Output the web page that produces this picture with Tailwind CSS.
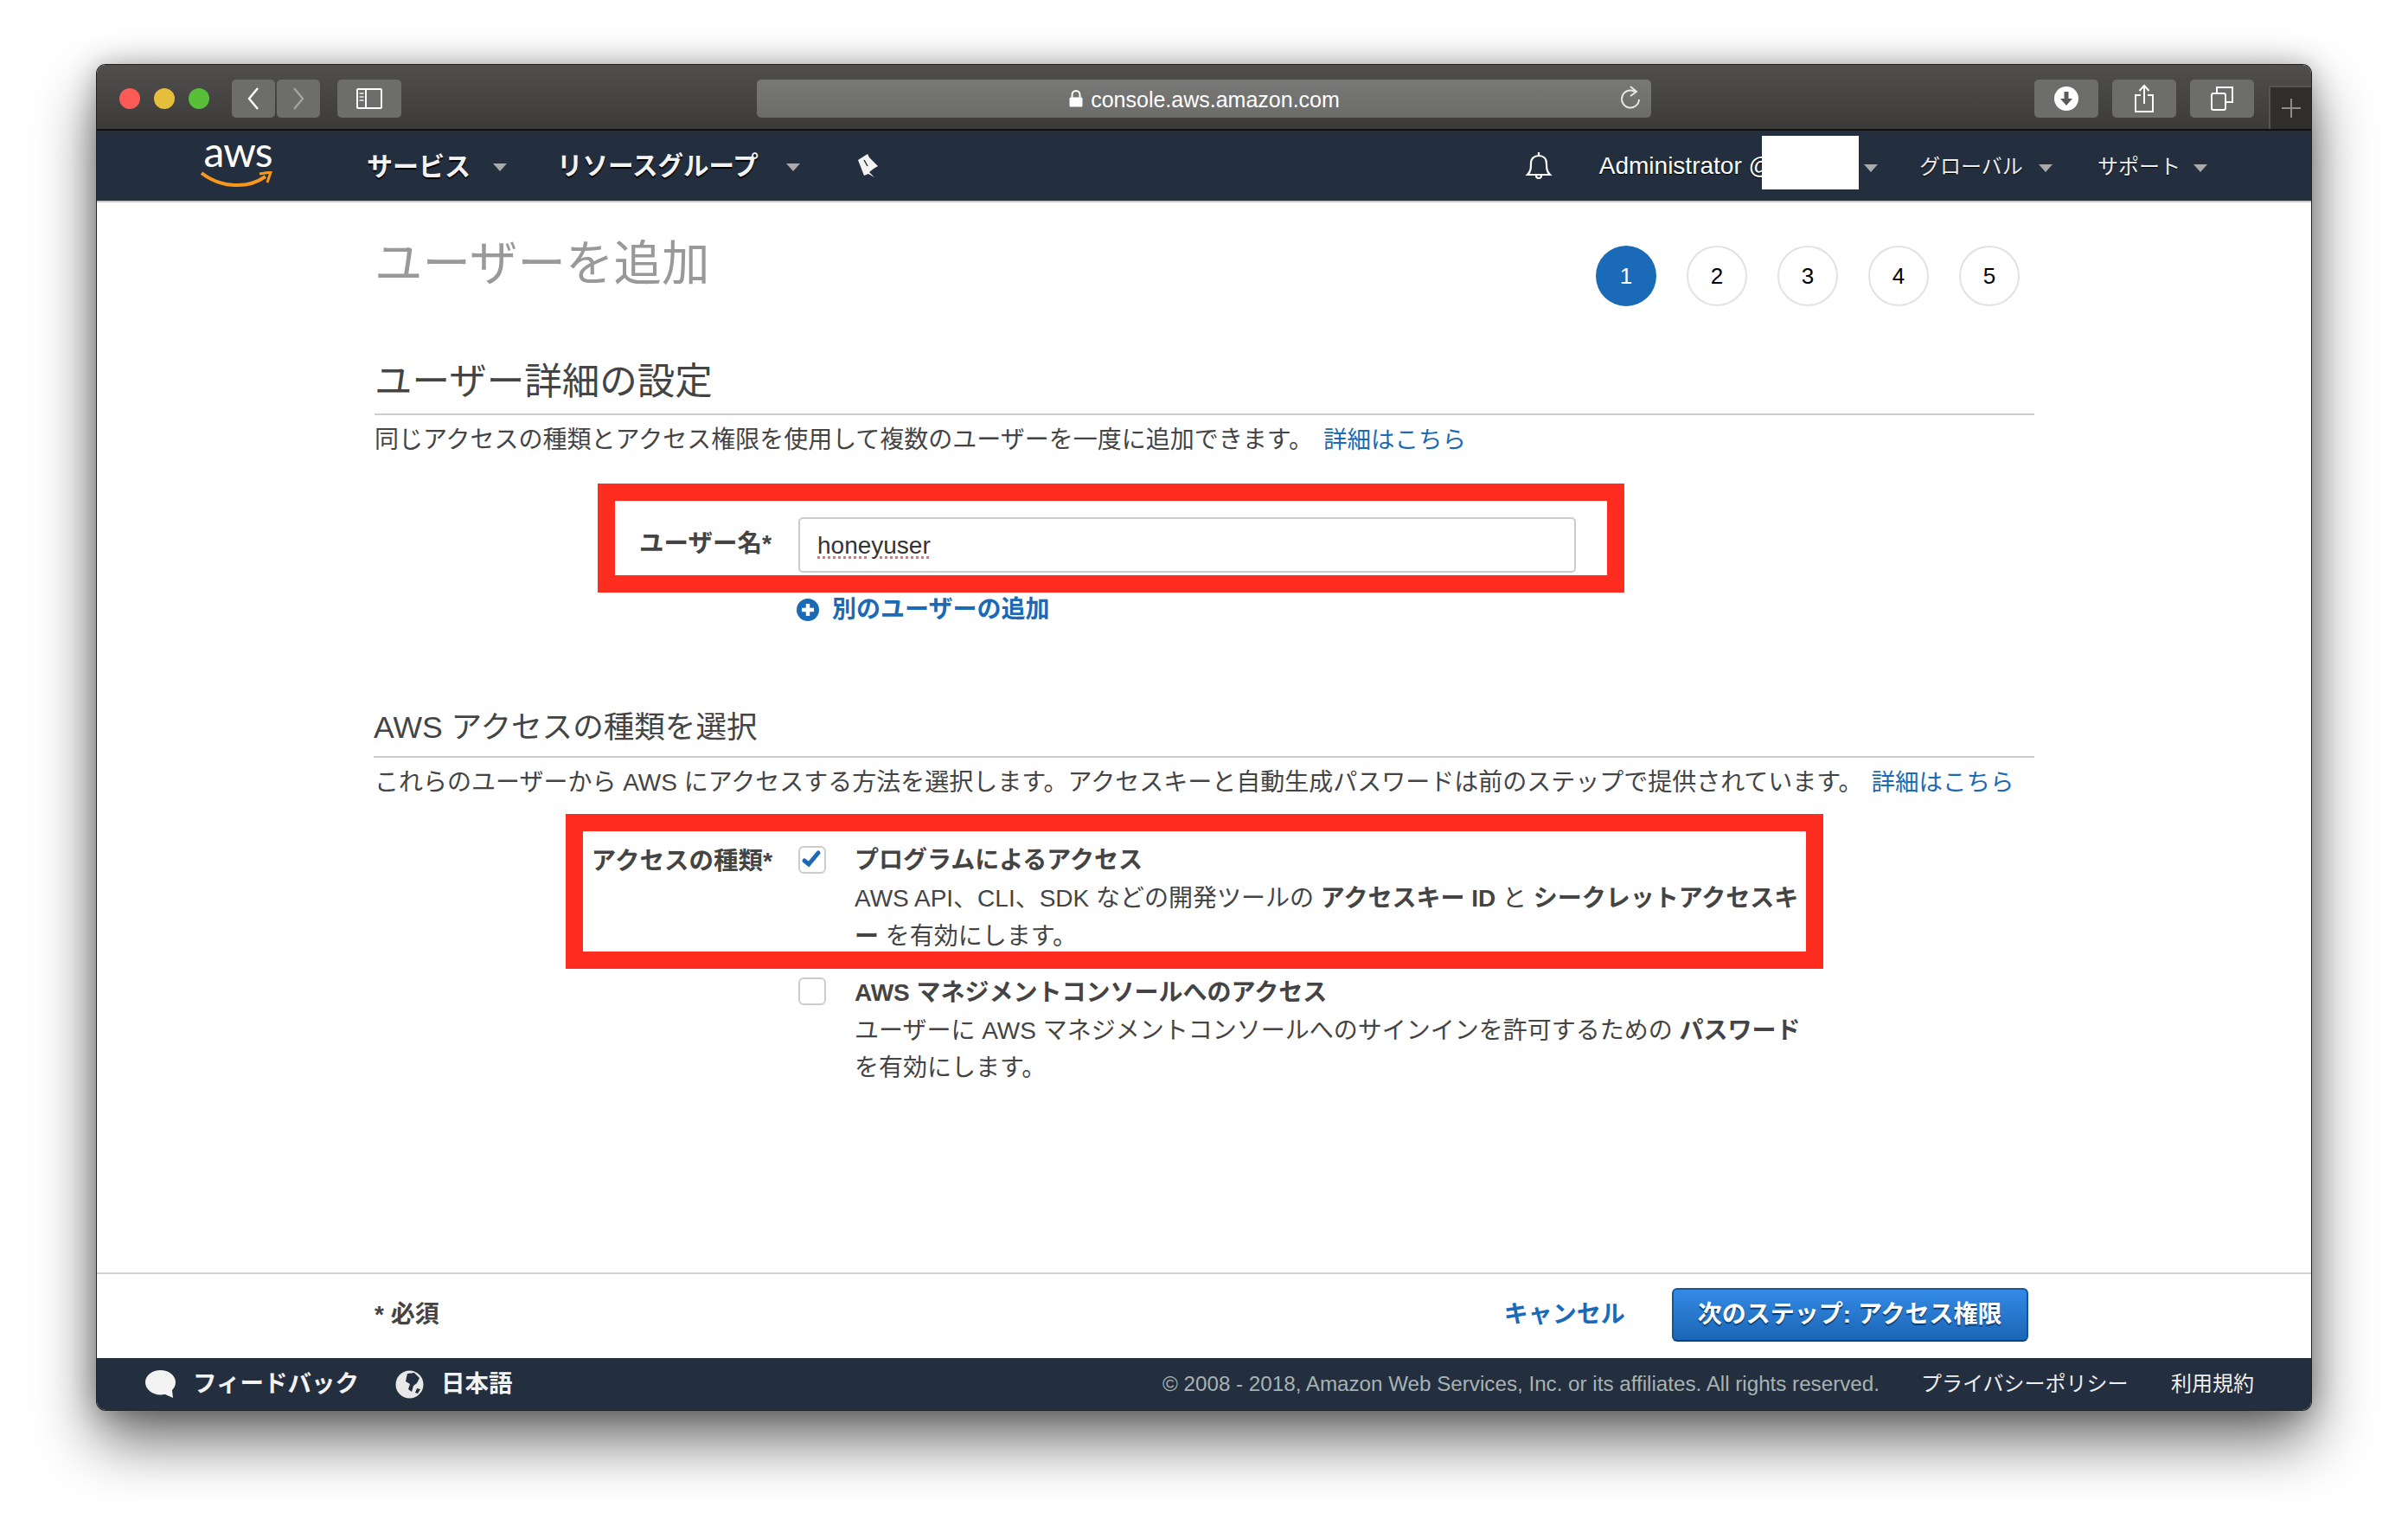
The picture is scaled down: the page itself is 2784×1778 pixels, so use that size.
<!DOCTYPE html>
<html lang="ja"><head><meta charset="utf-8"><script src="https://cdn.jsdelivr.net/npm/@tailwindcss/browser@4"></script></head>
<body class="bg-white m-0 w-[2784px] h-[1778px] overflow-hidden font-['Liberation_Sans','Noto_Sans_CJK_JP',sans-serif]">
<div class="pt-[75px] pl-[112px]">
<div class="relative w-[2560px] h-[1555px] rounded-[10px] flex flex-col bg-white shadow-[0_0_0_1px_#222,0_34px_70px_rgba(0,0,0,0.6),0_0_32px_rgba(0,0,0,0.28)]">
  <!-- title bar -->
  <div class="relative h-[76px] shrink-0 rounded-t-[10px] bg-gradient-to-b from-[#504f4d] to-[#3c3b39] border-b-2 border-[#111] flex items-start pt-[17px] pl-[26px]">
    <span class="w-6 h-6 mt-[10px] rounded-full bg-[#fc5b57]"></span>
    <span class="w-6 h-6 mt-[10px] ml-4 rounded-full bg-[#e5bf3c]"></span>
    <span class="w-6 h-6 mt-[10px] ml-4 rounded-full bg-[#57c038]"></span>
    <div class="ml-[26px] w-[50px] h-11 rounded-[5px] bg-[#6d6d6b] flex items-center justify-center"><svg width="18" height="30" viewBox="0 0 18 30" fill="none" stroke="#fff" stroke-width="2.4"><path d="M14 3 4 15l10 12"/></svg></div>
    <div class="ml-[2px] w-[50px] h-11 rounded-[5px] bg-[#6d6d6b] flex items-center justify-center"><svg width="18" height="30" viewBox="0 0 18 30" fill="none" stroke="#a3a3a1" stroke-width="2.4"><path d="M4 3l10 12L4 27"/></svg></div>
    <div class="ml-5 w-[74px] h-11 rounded-[5px] bg-[#6d6d6b] flex items-center justify-center"><svg width="30" height="24" viewBox="0 0 30 24" fill="none" stroke="#fff" stroke-width="2"><rect x="1" y="1" width="28" height="22" rx="1"/><path d="M11 1v22"/><path d="M3.500 6h5M3.500 10h5M3.500 14h5" stroke="#ccc"/></svg></div>
    <div class="relative ml-[411px] w-[1034px] h-11 rounded-[5px] bg-gradient-to-b from-[#787876] to-[#6c6c6a] flex items-center justify-center text-white text-[25px]">
      <svg class="mr-2" width="18" height="22" viewBox="0 0 18 22"><path d="M4.500 10V6.500a4.500 4.500 0 0 1 9 0V10" fill="none" stroke="#fff" stroke-width="2"/><rect x="1.500" y="9.500" width="15" height="11" rx="1.500" fill="#fff"/></svg>
      <span class="mt-[3px]">console.aws.amazon.com</span>
      <svg class="absolute right-[11px] top-[6px]" width="26" height="30" viewBox="0 0 26 30" fill="none" stroke="#e6e6e6" stroke-width="2"><path d="M19 8.500A10 10 0 1 0 23 17"/><path d="M13 2l7 6-7 5" stroke-width="2"/></svg>
    </div>
    <div class="ml-[443px] w-[74px] h-11 rounded-[5px] bg-[#6d6d6b] flex items-center justify-center"><svg width="28" height="28" viewBox="0 0 28 28"><circle cx="14" cy="14" r="14" fill="#fff"/><path d="M11.500 6h5v8h4.500L14 22l-7-8h4.500z" fill="#5a5a58"/></svg></div>
    <div class="ml-4 w-[74px] h-11 rounded-[5px] bg-[#6d6d6b] flex items-center justify-center"><svg width="24" height="34" viewBox="0 0 24 34" fill="none" stroke="#fff" stroke-width="2"><path d="M8 13H2v19h20V13h-6"/><path d="M12 23V2M6.500 8 12 2l5.500 6"/></svg></div>
    <div class="ml-4 w-[74px] h-11 rounded-[5px] bg-[#6d6d6b] flex items-center justify-center"><svg width="26" height="28" viewBox="0 0 26 28" fill="none" stroke="#fff" stroke-width="2"><rect x="1" y="8" width="16" height="19" rx="2"/><path d="M7 8V1h18v17h-8"/></svg></div>
    <div class="absolute right-0 bottom-0 w-[49px] h-[50px] bg-[#2f2e2d] border-l-2 border-t-2 border-[#555] flex items-center justify-center"><svg width="22" height="22" viewBox="0 0 22 22" stroke="#8c8c8c" stroke-width="2"><path d="M11 0v22M0 11h22"/></svg></div>
  </div>
  <!-- aws nav -->
  <div class="relative h-[83px] shrink-0 bg-[#232f3e] border-b-2 border-[#c8c8c8] flex items-center text-white">
    <div class="relative ml-[123px] w-[80px] h-[60px] mb-[6px]">
      <span class="absolute left-0 top-[-7px] w-[80px] text-center text-[48px] leading-[46px] tracking-[-1px] font-['Lato',sans-serif] text-white">aws</span>
      <svg class="absolute left-[-3px] top-[39px]" width="86" height="20" viewBox="0 0 86 20" fill="none"><path d="M1 2c22 17 53 19 74 4" stroke="#f7981d" stroke-width="4"/><path d="M68 3l13-2-4 12" stroke="#f7981d" stroke-width="3"/></svg>
    </div>
    <span class="ml-[109px] mt-[2px] text-[30px] font-bold [text-shadow:0_2px_1px_#000] text-[#f3f3f3]">サービス</span>
    <svg class="ml-[25px] mt-[4px]" width="18" height="11" viewBox="0 0 18 11"><path d="M1 1h16L9 10z" fill="#aaa"/></svg>
    <span class="ml-[57px] mt-[2px] text-[29.500px] font-bold [text-shadow:0_2px_1px_#000] text-[#f3f3f3]">リソースグループ</span>
    <svg class="ml-[31px] mt-[4px]" width="18" height="11" viewBox="0 0 18 11"><path d="M1 1h16L9 10z" fill="#aaa"/></svg>
    <svg class="ml-[65px]" width="26" height="30" viewBox="9 7 26 30"><path d="M10 15 21 8l2 4 10 10-5 3-5 4 6 6-7-4-5 2z" fill="#f3f3f3"/><path d="M17 15l4 7" stroke="#232f3e" stroke-width="1.500"/></svg>
    <svg class="ml-[746px]" width="32" height="36" viewBox="0 0 32 36" fill="none" stroke="#fff" stroke-width="2.200"><path d="M3 28c4-4 4-8 4-13 0-6 4-9 9-9s9 3 9 9c0 5 0 9 4 13z"/><path d="M16 6V2M13 29a3 3 0 0 0 6 0"/></svg>
    <span class="ml-[54px] text-[28px] [text-shadow:0_1px_1px_#000] whitespace-nowrap">Administrator @</span>
    <svg class="absolute left-[2042px] top-[38px]" width="18" height="11" viewBox="0 0 18 11"><path d="M1 1h16L9 10z" fill="#aaa"/></svg>
    <span class="absolute left-[2107px] mt-[2px] text-[24px] [text-shadow:0_1px_1px_#000] text-[#eee]">グローバル</span>
    <svg class="absolute left-[2244px] top-[38px]" width="18" height="11" viewBox="0 0 18 11"><path d="M1 1h16L9 10z" fill="#aaa"/></svg>
    <span class="absolute left-[2313px] mt-[2px] text-[24px] [text-shadow:0_1px_1px_#000] text-[#eee]">サポート</span>
    <svg class="absolute left-[2423px] top-[38px]" width="18" height="11" viewBox="0 0 18 11"><path d="M1 1h16L9 10z" fill="#aaa"/></svg>
    <div class="absolute left-[1925px] top-[6px] w-[112px] h-[62px] bg-white"></div>
  </div>
  <!-- main -->
  <div class="flex-1 pl-[321px] pr-[320px] text-[#444]">
    <div class="flex justify-between items-start pt-10 h-[120px]">
      <h1 class="text-[55.500px] leading-[62px] font-normal text-[#999]">ユーザーを追加</h1>
      <div class="flex gap-[35px] mt-[10px] mr-[17px] text-[26px] text-black">
        <span class="w-[70px] h-[70px] rounded-full bg-[#1b6ab7] text-white flex items-center justify-center">1</span>
        <span class="w-[70px] h-[70px] rounded-full border-2 border-[#e2e2e2] flex items-center justify-center">2</span>
        <span class="w-[70px] h-[70px] rounded-full border-2 border-[#e2e2e2] flex items-center justify-center">3</span>
        <span class="w-[70px] h-[70px] rounded-full border-2 border-[#e2e2e2] flex items-center justify-center">4</span>
        <span class="w-[70px] h-[70px] rounded-full border-2 border-[#e2e2e2] flex items-center justify-center">5</span>
      </div>
    </div>
    <h2 class="mt-[62px] text-[43.500px] leading-[50px] pb-[12px] border-b-2 border-[#ccc] font-normal">ユーザー詳細の設定</h2>
    <p class="mt-[9px] text-[28px] leading-10 whitespace-nowrap">同じアクセスの種類とアクセス権限を使用して複数のユーザーを一度に追加できます。<a class="ml-3 text-[27.500px] text-[#1b6ab7]">詳細はこちら</a></p>
    <div class="mt-[69px] flex items-center h-16">
      <label class="w-[459px] text-right font-bold text-[28.500px] mb-[4px] mr-px">ユーザー名*</label>
      <div class="ml-[30px] w-[899px] h-16 border-2 border-[#ccc] rounded-[5px] flex items-center pl-5 pt-[2px] text-[28px] text-[#333]"><span class="underline decoration-dotted decoration-[#f66] decoration-[3px] underline-offset-[3px]">honeyuser</span></div>
    </div>
    <div class="mt-[23px] pl-[488px] flex items-center h-10 text-[#1b6ab7] font-bold text-[28px]">
      <svg width="26" height="26" viewBox="0 0 26 26"><circle cx="13" cy="13" r="13" fill="#1b6ab7"/><path d="M13 6v14M6 13h14" stroke="#fff" stroke-width="4.500"/></svg>
      <span class="ml-[15px]">別のユーザーの追加</span>
    </div>
    <h2 class="mt-[91px] text-[35.600px] leading-[50px] pb-[8px] border-b-2 border-[#ccc] font-normal -ml-px">AWS アクセスの種類を選択</h2>
    <p class="mt-[9px] text-[28px] leading-10 whitespace-nowrap">これらのユーザーから AWS にアクセスする方法を選択します。アクセスキーと自動生成パスワードは前のステップで提供されています。<a class="ml-[10px] text-[27.500px] text-[#1b6ab7]">詳細はこちら</a></p>
    <div class="mt-[48px] flex items-start text-[28px] leading-11">
      <label class="w-[460px] text-right font-bold whitespace-nowrap text-[28.500px]">アクセスの種類*</label>
      <span class="ml-[30px] mt-[5px] w-[32px] h-[32px] shrink-0 border-2 border-[#ccc] rounded-[6px] bg-white flex items-center justify-center"><svg width="28" height="28" viewBox="0 0 28 28" fill="none"><path d="M5 15l5 4L21 6" stroke="#1b6ab7" stroke-width="5" stroke-linecap="round"/></svg></span>
      <div class="ml-[33px] whitespace-nowrap"><div class="font-bold">プログラムによるアクセス</div><div>AWS API、CLI、SDK などの開発ツールの <b>アクセスキー ID</b> と <b>シークレットアクセスキ<br>ー</b> を有効にします。</div></div>
    </div>
    <div class="mt-[21px] flex items-start text-[28px] leading-[43.500px]">
      <span class="ml-[490px] mt-1 w-[32px] h-[32px] shrink-0 border-2 border-[#ccc] rounded-[6px] bg-white"></span>
      <div class="ml-[33px] whitespace-nowrap"><div class="font-bold">AWS マネジメントコンソールへのアクセス</div><div>ユーザーに AWS マネジメントコンソールへのサインインを許可するための <b>パスワード</b><br>を有効にします。</div></div>
    </div>
  </div>
  <!-- form footer -->
  <div class="h-[99px] shrink-0 border-t-2 border-[#d5d5d5] flex items-center pl-[321px] pb-1 text-[28px] font-bold text-[#444]">
    <span>* 必須</span>
    <a class="ml-[1231px] text-[#1b6ab7] whitespace-nowrap">キャンセル</a>
    <button class="ml-[54px] w-[412px] h-[62px] rounded-[6px] border-2 border-[#13569c] border-b-[#0d4178] bg-gradient-to-b from-[#338ae6] to-[#1b66b5] text-white [text-shadow:0_2px_1px_#0a3a70] whitespace-nowrap">次のステップ: アクセス権限</button>
  </div>
  <!-- footer -->
  <div class="h-[60px] shrink-0 rounded-b-[10px] bg-[#232f3e] flex items-center text-white relative">
    <svg class="ml-[56px]" width="35" height="33" viewBox="0 0 35 33"><path d="M17.500 0C27 0 35 6 35 14c0 4-2 7-4 9l1 9-9-4c-2 0-4 .5-5.500 .5C8 28.500 0 22 0 14 0 6 8 0 17.500 0z" fill="#f3f3f3"/></svg>
    <span class="ml-5 text-[27.500px] font-bold text-[#f3f3f3]">フィードバック</span>
    <svg class="ml-[42px]" width="33" height="33" viewBox="0 0 33 33"><circle cx="16.500" cy="16.500" r="16" fill="#e8e8e8"/><path d="M14 4l8-1 6 6-3 6-4 3-2 7-4-3 2-6-5-3 1-5zM25 21l4 1-3 5-3-1z" fill="#232f3e"/></svg>
    <span class="ml-5 text-[27.500px] font-bold text-[#f3f3f3]">日本語</span>
    <span class="absolute left-[1232px] text-[24.200px] text-[#a9b2b2] whitespace-nowrap">© 2008 - 2018, Amazon Web Services, Inc. or its affiliates. All rights reserved.</span>
    <span class="absolute left-[2109px] text-[24px] text-[#eee] whitespace-nowrap">プライバシーポリシー</span>
    <span class="absolute left-[2398px] text-[24px] text-[#eee] whitespace-nowrap">利用規約</span>
  </div>
  <!-- red annotations -->
  <div class="absolute left-[579px] top-[484px] w-[1187px] h-[126px] border-[20px] border-[#ff2d20]"></div>
  <div class="absolute left-[542px] top-[866px] w-[1454px] h-[179px] border-[20px] border-[#ff2d20]"></div>
</div>
</div>
</body></html>
